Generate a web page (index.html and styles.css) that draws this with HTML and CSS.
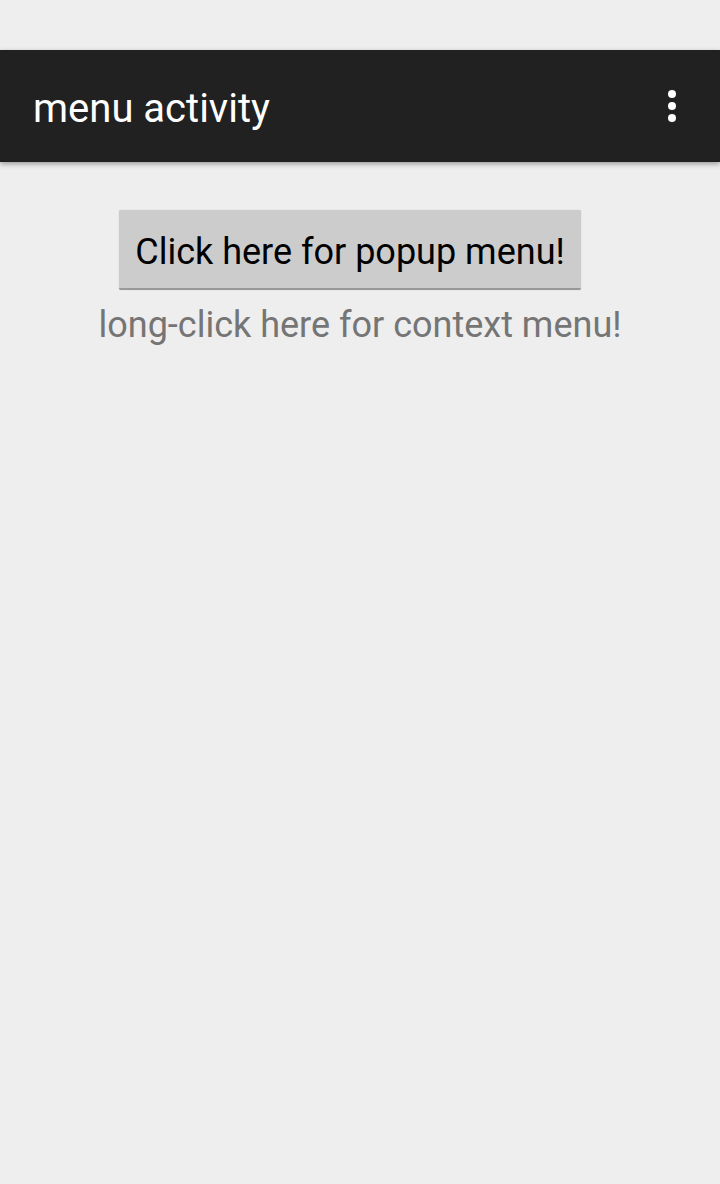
FILE: index.html
```html
<!DOCTYPE html>
<html>
<head>
<meta charset="utf-8">
<link rel="stylesheet" href="styles.css">
</head>
<body>
<div class="status"></div>
<header class="actionbar">
  <div class="title">menu activity</div>
  <div class="overflow">
    <svg width="10" height="34" viewBox="0 0 10 34"><circle cx="5" cy="5" r="4" fill="#fff"/><circle cx="5" cy="17" r="4" fill="#fff"/><circle cx="5" cy="29" r="4" fill="#fff"/></svg>
  </div>
</header>
<main class="content">
  <button class="btn">Click here for popup menu!</button>
  <div class="hint">long-click here for context menu!</div>
</main>
</body>
</html>
```

FILE: styles.css
```css
html, body {
  margin: 0;
  padding: 0;
  background: #eeeeee;
  font-family: Roboto, "Liberation Sans", sans-serif;
}
body {
  width: 720px;
  height: 1184px;
  overflow: hidden;
}
.status {
  height: 50px;
  background: #eeeeee;
}
.actionbar {
  height: 112px;
  background: #212121;
  display: flex;
  align-items: center;
  justify-content: space-between;
  padding: 0 43px 0 33px;
  box-sizing: border-box;
  box-shadow: 0 2px 5px rgba(0,0,0,0.35);
  position: relative;
  z-index: 1;
}
.title {
  color: #ffffff;
  font-size: 40px;
  line-height: 1;
  padding-top: 6px;
}
.overflow {
  display: flex;
  align-items: center;
}
.overflow svg {
  display: block;
}
.content {
  display: flex;
  flex-direction: column;
  align-items: center;
  padding-top: 48px;
}
.btn {
  width: 462px;
  height: 80px;
  margin-right: 20px;
  background: #cccccc;
  border: none;
  border-bottom: 2px solid #999;
  border-radius: 2px;
  font-family: Roboto, "Liberation Sans", sans-serif;
  font-size: 36px;
  color: #000;
  padding: 5px 0 0 0;
  box-shadow: 0 0 1px rgba(0,0,0,0.25);
}
.hint {
  margin-top: 14px;
  font-size: 36px;
  color: #757575;
}
```
